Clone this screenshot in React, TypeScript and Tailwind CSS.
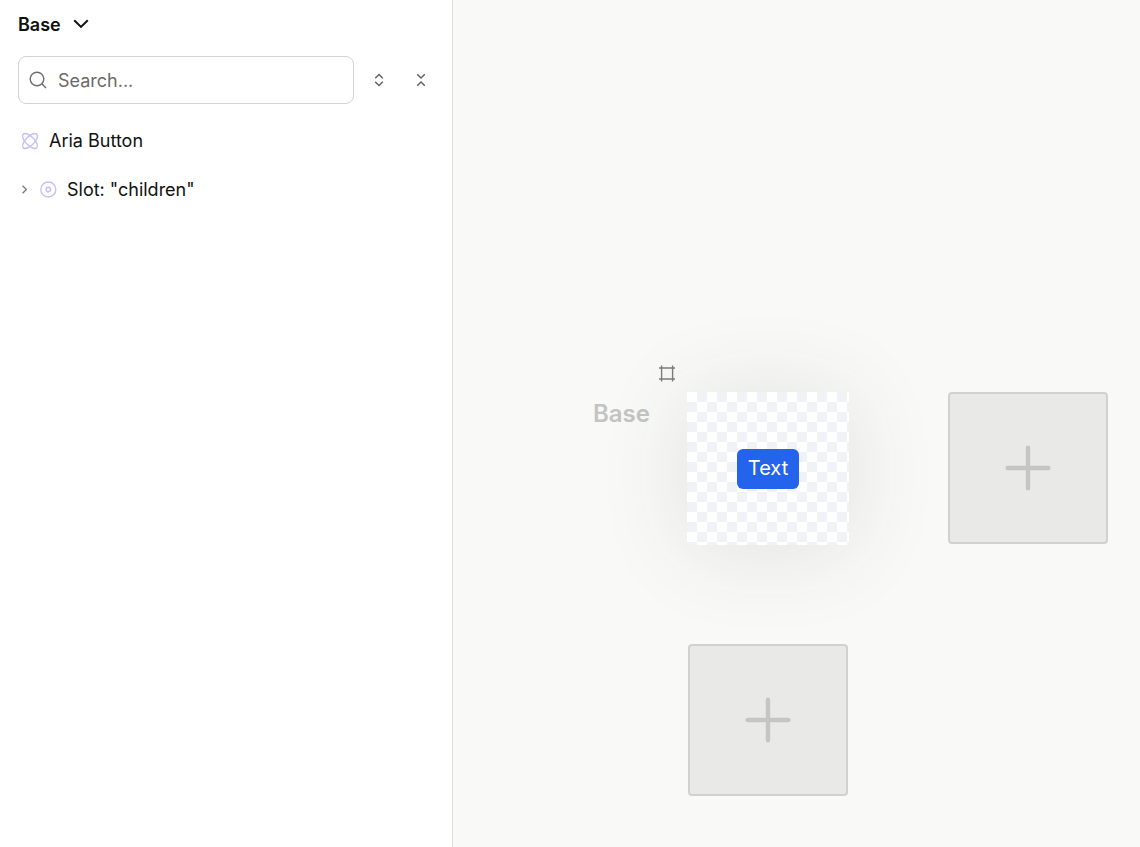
import React from 'react';

const ChevronDown: React.FC = () => (
    <svg width="16" height="16" viewBox="0 0 16 16" fill="none" stroke="#11110f" strokeWidth="2">
        <path d="M1.2 3.2 8 9.9l6.8-6.7" />
    </svg>
);

const ChevronRight: React.FC = () => (
    <svg width="12" height="12" viewBox="0 0 12 12" fill="none" stroke="#7c7c7a" strokeWidth="1.4">
        <path d="M4.6 1.8 8.3 5.5 4.6 9.2" />
    </svg>
);

const SearchIcon: React.FC = () => (
    <svg width="18" height="18" viewBox="0 0 18 18" fill="none" stroke="#6f6f6d" strokeWidth="1.4">
        <circle cx="8" cy="8" r="6.8" />
        <path d="m13 13 4 4" />
    </svg>
);

const ExpandIcon: React.FC = () => (
    <svg width="16" height="16" viewBox="0 0 16 16" fill="none" stroke="#5f5f5d" strokeWidth="1.4">
        <path d="M4.2 6.2 8 2.5l3.8 3.7M4.2 9.8 8 13.5l3.8-3.7" />
    </svg>
);

const CollapseIcon: React.FC = () => (
    <svg width="16" height="16" viewBox="0 0 16 16" fill="none" stroke="#5f5f5d" strokeWidth="1.4">
        <path d="M4.2 2.2 8 5.9l3.8-3.7M4.2 13.8 8 10.1l3.8 3.7" />
    </svg>
);

const AriaIcon: React.FC = () => (
    <svg width="20" height="20" viewBox="0 0 24 24" fill="none" stroke="#c5c0f7" strokeWidth="1.7">
        <path d="M20.2 20.2c2.04-2.03.02-7.36-4.5-11.9-4.54-4.52-9.87-6.54-11.9-4.5-2.04 2.03-.02 7.36 4.5 11.9 4.54 4.52 9.87 6.54 11.9 4.5Z" />
        <path d="M15.7 15.7c4.52-4.54 6.54-9.87 4.5-11.9-2.03-2.04-7.36-.02-11.9 4.5-4.52 4.54-6.54 9.87-4.5 11.9 2.03 2.04 7.36.02 11.9-4.5Z" />
    </svg>
);

const SlotIcon: React.FC = () => (
    <svg width="18" height="18" viewBox="0 0 18 18" fill="none" stroke="#c5c0f7" strokeWidth="1.4">
        <circle cx="9.3" cy="8.5" r="7.5" />
        <circle cx="9.3" cy="8.5" r="2.3" />
    </svg>
);

const FrameIcon: React.FC = () => (
    <svg width="18" height="18" viewBox="0 0 18 18" fill="none" stroke="#7d7d7b" strokeWidth="1.4">
        <path d="M1 4h16M1 15h16M3.6 1.4v16M14.6 1.4v16" />
    </svg>
);

const AddButton: React.FC<{ label: string }> = ({ label }) => (
    <button
        type="button"
        aria-label={label}
        className="flex h-[152px] w-40 items-center justify-center justify-self-center rounded-sm border-2 border-[#d1d1cf] bg-[#e9e9e8]"
    >
        <svg width="46" height="46" viewBox="0 0 46 46" fill="none" stroke="#c5c5c3" strokeWidth="4.4" strokeLinecap="round">
            <path d="M23 2.7v40.6M2.7 23h40.6" />
        </svg>
    </button>
);

const Outline: React.FC = () => (
    <aside className="w-[453px] shrink-0 border-r border-[#dededc] bg-white pr-[10px] pl-[18px]">
        <button type="button" className="flex h-[50px] items-center gap-3 text-lg font-semibold">
            Base
            <ChevronDown />
        </button>
        <div className="mt-[6px] flex items-center gap-1">
            <label className="flex h-12 min-w-0 flex-1 items-center gap-[11px] rounded-lg border border-[#d3d3d1] px-[10px]">
                <SearchIcon />
                <input
                    type="text"
                    aria-label="Search"
                    placeholder="Search..."
                    className="min-w-0 flex-1 bg-transparent pt-px text-lg outline-none placeholder:text-[#6b6b69]"
                />
            </label>
            <div className="flex">
                <button type="button" aria-label="Expand all" className="flex h-10 w-[42px] items-center justify-center">
                    <ExpandIcon />
                </button>
                <button type="button" aria-label="Collapse all" className="flex h-10 w-[42px] items-center justify-center">
                    <CollapseIcon />
                </button>
            </div>
        </div>
        <ul className="mt-3 text-lg">
            <li className="flex h-[49px] items-center gap-[9px] pl-[2px]">
                <AriaIcon />
                Aria Button
            </li>
            <li className="flex h-[49px] items-center">
                <button type="button" aria-label="Expand slot" className="mr-[9px]">
                    <ChevronRight />
                </button>
                <SlotIcon />
                <span className="ml-[10px]">Slot: "children"</span>
            </li>
        </ul>
    </aside>
);

const Canvas: React.FC = () => (
    <main className="flex-1 bg-[#f9f9f8] pt-[364px] pl-[140px]">
        <div className="pl-[65px]">
            <FrameIcon />
        </div>
        <div className="mt-[10px] flex">
            <h2 className="w-[94px] shrink-0 pt-[6px] text-2xl font-semibold text-[#c4c4c2]">Base</h2>
            <div className="grid grid-cols-[162px_160px] gap-[99px]">
                <div className="flex h-[153px] items-center justify-center bg-[repeating-conic-gradient(#f1f2f6_0_25%,#fff_0_50%)] bg-size-[20px_20px] shadow-[0_4px_90px_rgba(60,60,50,0.12)]">
                    <button type="button" className="h-10 rounded-md bg-[#2463eb] px-[11px] pb-px text-xl text-white">
                        Text
                    </button>
                </div>
                <AddButton label="Add variant" />
                <AddButton label="Add state" />
            </div>
        </div>
    </main>
);

export default function App() {
    return (
        <div className="flex min-h-screen font-[Inter,sans-serif] text-[#11110f]">
            <Outline />
            <Canvas />
        </div>
    );
}
